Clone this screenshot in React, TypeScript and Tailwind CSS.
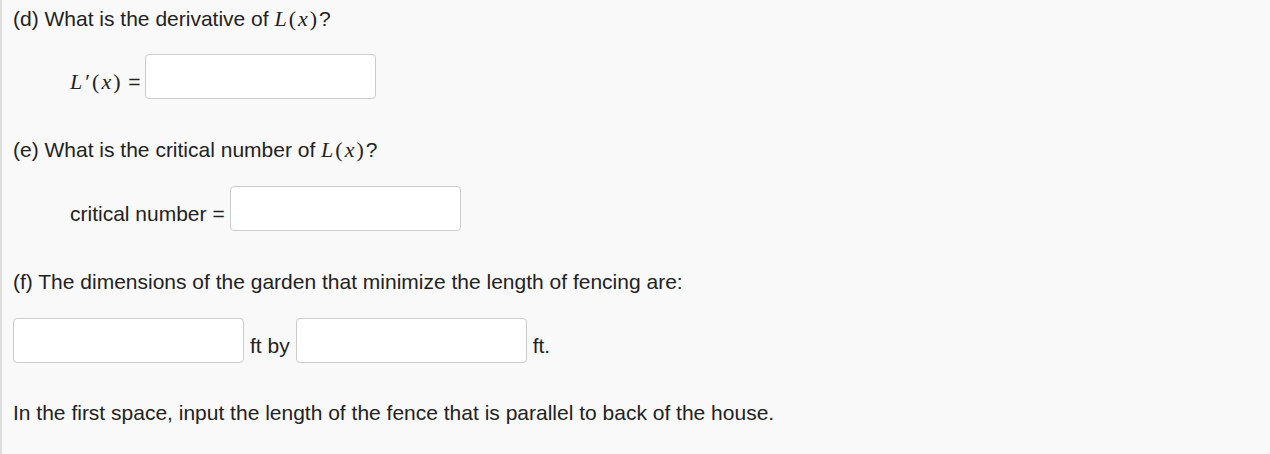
import React from "react";

function Lx({ prime = false }: { prime?: boolean }) {
  return (
    <span className="font-['Liberation_Serif',serif] text-[22px] tracking-[2px]">
      <span className="italic">L</span>
      {prime && <span className="ml-[1px]">′</span>}
      <span>(</span>
      <span className="italic">x</span>
      <span>)</span>
    </span>
  );
}

function Box() {
  return (
    <input
      type="text"
      className="w-[231px] h-[45px] bg-white border border-[#cccccc] rounded-[4px] outline-none"
    />
  );
}

export default function App() {
  return (
    <div className="h-[454px] w-[1270px] bg-[#f9f9f9] border-l-[2px] border-[#dddddd] pl-[11px] font-['Liberation_Sans',Arial,sans-serif] text-[21px] text-[#222222] overflow-hidden">
      <div className="pt-[8px] leading-[22px]">
        (d) What is the derivative of <Lx />?
      </div>
      <div className="mt-[24px] flex items-end pl-[57px]">
        <span className="mr-[4px] pb-[6px] leading-[22px]">
          <Lx prime /> =
        </span>
        <Box />
      </div>

      <div className="mt-[40px] leading-[22px]">
        (e) What is the critical number of <Lx />?
      </div>
      <div className="mt-[25px] flex items-end pl-[57px]">
        <span className="mr-[5px] pb-[6px] leading-[22px]">critical number =</span>
        <Box />
      </div>

      <div className="mt-[40px] leading-[22px]">
        (f) The dimensions of the garden that minimize the length of fencing are:
      </div>
      <div className="mt-[25px] flex items-end">
        <Box />
        <span className="mx-[6px] pb-[6px] leading-[22px]">ft by</span>
        <Box />
        <span className="ml-[6px] pb-[6px] leading-[22px]">ft.</span>
      </div>

      <div className="mt-[39px] leading-[22px]">
        In the first space, input the length of the fence that is parallel to back of the house.
      </div>
    </div>
  );
}
